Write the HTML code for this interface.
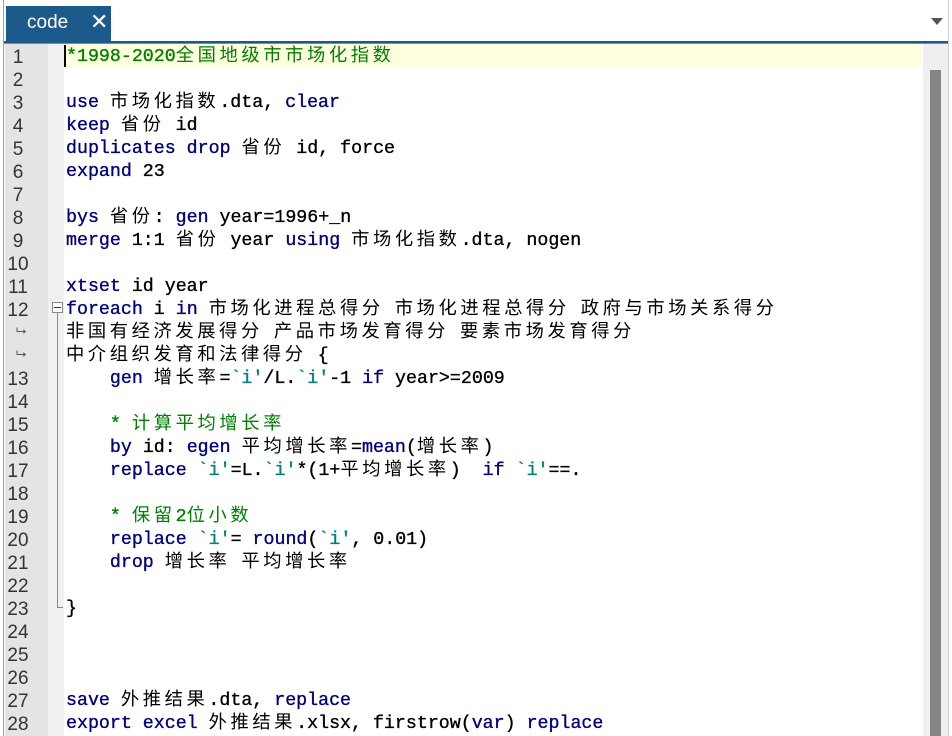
<!DOCTYPE html>
<html><head><meta charset="utf-8"><style>
*{margin:0;padding:0;box-sizing:border-box}
body{width:952px;height:736px;overflow:hidden;background:#fff;position:relative;font-family:"Liberation Mono","Noto Sans CJK SC",monospace}
#lb{position:absolute;left:3px;top:0;width:1px;height:736px;background:#a0a0a0}
#tab{position:absolute;left:6px;top:6px;width:105px;height:36px;background:#1c5a8c;color:#fff;font-family:"Liberation Sans",sans-serif;font-size:19px}
#tab .t{position:absolute;left:21px;top:6px}
#tab .x{position:absolute;left:84px;top:3px;font-size:22px}
#bl{position:absolute;left:4px;top:41px;width:944px;height:2px;background:#1c5a8c}
#bl2{position:absolute;left:4px;top:43px;width:944px;height:1px;background:#888}
#arr{position:absolute;left:931px;top:18px;width:0;height:0;border-left:6px solid transparent;border-right:6px solid transparent;border-top:7px solid #555}
#g1{position:absolute;left:5px;top:44px;width:43px;height:692px;background:#e4e4e4}
#g2{position:absolute;left:48px;top:44px;width:16px;height:692px;background:#f0f0f0}
#hl{position:absolute;left:64px;top:44px;width:857px;height:23px;background:#ffffe0}
#cur{position:absolute;left:64px;top:45px;width:2px;height:22px;background:#000}
#sb{position:absolute;left:923px;top:44px;width:25px;height:692px;background:#efefef}
#th{position:absolute;left:930px;top:70px;width:11px;height:666px;background:#858585}
#rb{position:absolute;left:948px;top:0;width:4px;height:736px;background:#fff;border-left:1px solid #d0d0d0}
.n{position:absolute;left:4px;width:28px;font-family:"Liberation Sans",sans-serif;font-size:19px;color:#333;text-align:center;height:23px;line-height:23px;margin-top:2px}
.l{position:absolute;left:66px;height:23px;line-height:23px;font-size:18.3px;white-space:pre;color:#000;margin-top:2px;-webkit-text-stroke:0.35px currentColor}
.c{letter-spacing:3.6px;-webkit-text-stroke:0}
.k{color:#00007f}.g{color:#008000}.s{color:#008080}
.w{position:absolute;left:16px;font-size:13px;color:#555;font-family:"DejaVu Sans",sans-serif}
</style></head><body>
<div id="lb"></div>
<div id="tab"><span class="t">code</span><span class="x">✕</span></div>
<div id="arr"></div>
<div id="bl"></div><div id="bl2"></div>
<div id="g1"></div><div id="g2"></div>
<div id="hl"></div><div id="cur"></div>
<div id="sb"></div><div id="th"></div><div id="rb"></div>
<div style="position:absolute;left:52px;top:302px;width:11px;height:11px;border:1px solid #888;background:#fff"></div>
<div style="position:absolute;left:54px;top:307px;width:7px;height:1px;background:#333"></div>
<div style="position:absolute;left:57px;top:313px;width:1px;height:295px;background:#888"></div>
<div style="position:absolute;left:57px;top:607px;width:6px;height:1px;background:#888"></div>
<div class="n" style="top:44px">1</div><div class="n" style="top:67px">2</div><div class="n" style="top:90px">3</div><div class="n" style="top:113px">4</div><div class="n" style="top:136px">5</div><div class="n" style="top:159px">6</div><div class="n" style="top:182px">7</div><div class="n" style="top:205px">8</div><div class="n" style="top:228px">9</div><div class="n" style="top:251px">10</div><div class="n" style="top:274px">11</div><div class="n" style="top:297px">12</div>
<div class="w" style="top:324px">⮡</div><div class="w" style="top:347px">⮡</div>
<div class="n" style="top:366px">13</div><div class="n" style="top:389px">14</div><div class="n" style="top:412px">15</div><div class="n" style="top:435px">16</div><div class="n" style="top:458px">17</div><div class="n" style="top:481px">18</div><div class="n" style="top:504px">19</div><div class="n" style="top:527px">20</div><div class="n" style="top:550px">21</div><div class="n" style="top:573px">22</div><div class="n" style="top:596px">23</div><div class="n" style="top:619px">24</div><div class="n" style="top:642px">25</div><div class="n" style="top:665px">26</div><div class="n" style="top:688px">27</div><div class="n" style="top:711px">28</div>

<div class="l g" style="top:44px">*1998-2020<span class="c">全国地级市市场化指数</span></div>
<div class="l" style="top:90px"><span class="k">use</span> <span class="c">市场化指数</span>.dta, <span class="k">clear</span></div>
<div class="l" style="top:113px"><span class="k">keep</span> <span class="c">省份</span> id</div>
<div class="l" style="top:136px"><span class="k">duplicates drop</span> <span class="c">省份</span> id, force</div>
<div class="l" style="top:159px"><span class="k">expand</span> 23</div>
<div class="l" style="top:205px"><span class="k">bys</span> <span class="c">省份</span>: <span class="k">gen</span> year=1996+_n</div>
<div class="l" style="top:228px"><span class="k">merge</span> 1:1 <span class="c">省份</span> year <span class="k">using</span> <span class="c">市场化指数</span>.dta, nogen</div>
<div class="l" style="top:274px"><span class="k">xtset</span> id year</div>
<div class="l" style="top:297px"><span class="k">foreach</span> i <span class="k">in</span> <span class="c">市场化进程总得分</span> <span class="c">市场化进程总得分</span> <span class="c">政府与市场关系得分</span></div>
<div class="l" style="top:320px"><span class="c">非国有经济发展得分</span> <span class="c">产品市场发育得分</span> <span class="c">要素市场发育得分</span></div>
<div class="l" style="top:343px"><span class="c">中介组织发育和法律得分</span> {</div>
<div class="l" style="top:366px">    <span class="k">gen</span> <span class="c">增长率</span>=<span class="s">`i'</span>/L.<span class="s">`i'</span>-1 <span class="k">if</span> year&gt;=2009</div>
<div class="l g" style="top:412px">    * <span class="c">计算平均增长率</span></div>
<div class="l" style="top:435px">    <span class="k">by</span> id: <span class="k">egen</span> <span class="c">平均增长率</span>=<span class="k">mean</span>(<span class="c">增长率</span>)</div>
<div class="l" style="top:458px">    <span class="k">replace</span> <span class="s">`i'</span>=L.<span class="s">`i'</span>*(1+<span class="c">平均增长率</span>)  <span class="k">if</span> <span class="s">`i'</span>==.</div>
<div class="l g" style="top:504px">    * <span class="c">保留</span>2<span class="c">位小数</span></div>
<div class="l" style="top:527px">    <span class="k">replace</span> <span class="s">`i'</span>= <span class="k">round</span>(<span class="s">`i'</span>, 0.01)</div>
<div class="l" style="top:550px">    <span class="k">drop</span> <span class="c">增长率</span> <span class="c">平均增长率</span></div>
<div class="l" style="top:596px">}</div>
<div class="l" style="top:688px"><span class="k">save</span> <span class="c">外推结果</span>.dta, <span class="k">replace</span></div>
<div class="l" style="top:711px"><span class="k">export excel</span> <span class="c">外推结果</span>.xlsx, firstrow(<span class="k">var</span>) <span class="k">replace</span></div>
</body></html>
